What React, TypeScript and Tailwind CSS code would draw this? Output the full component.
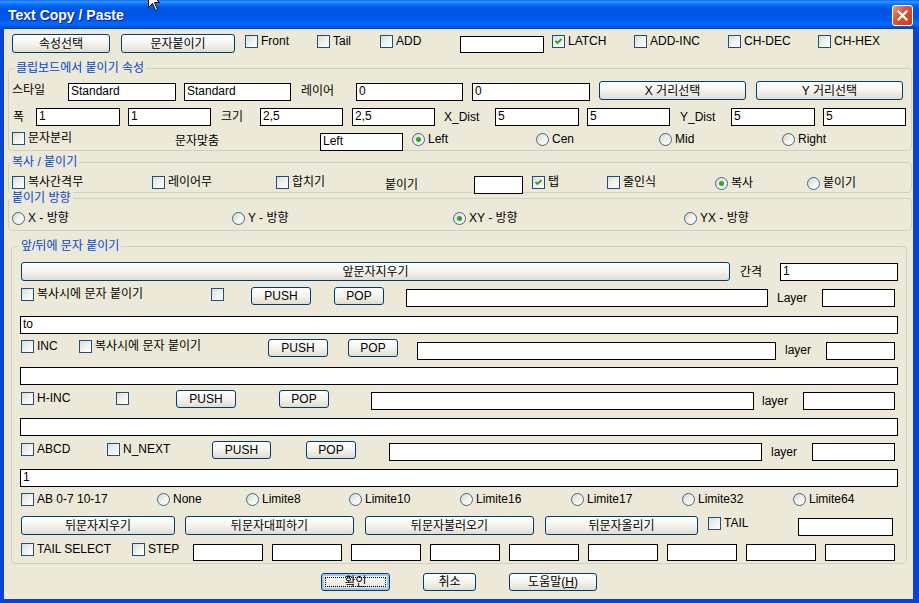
import React from "react";

type Kids = { className?: string; children?: React.ReactNode };

function Cell({ className = "", children }: Kids) {
  return <div className={`shrink-0 flex items-start ${className}`}>{children}</div>;
}

function Row({ className = "", children }: Kids) {
  return <div className={`flex items-start shrink-0 ${className}`}>{children}</div>;
}

function Check({ label, checked = false, className = "" }: { label?: string; checked?: boolean; className?: string }) {
  return (
    <div className={`flex items-center gap-[3px] h-[13px] whitespace-nowrap ${className}`}>
      <span className="relative shrink-0 w-[13px] h-[13px] border border-[#1C5180] bg-linear-to-br from-[#DCDCD7] via-[#F1F1ED] to-white">
        {checked && (
          <svg className="absolute inset-0" width="11" height="11" viewBox="0 0 11 11">
            <path d="M2.5 5 L4.5 7 L8.5 3" fill="none" stroke="#21A121" strokeWidth="1.8" />
          </svg>
        )}
      </span>
      {label && <span className="text-[12px] leading-[13px]">{label}</span>}
    </div>
  );
}

function Radio({ label, checked = false, className = "" }: { label: string; checked?: boolean; className?: string }) {
  return (
    <div className={`flex items-center gap-[3px] h-[13px] whitespace-nowrap ${className}`}>
      <span className="relative shrink-0 w-[13px] h-[13px] rounded-full border border-[#44658A] bg-linear-to-br from-[#D6D6D0] via-[#F1F1ED] to-white">
        {checked && <span className="absolute left-[3px] top-[3px] w-[5px] h-[5px] rounded-full bg-[#2CA52C]" />}
      </span>
      <span className="text-[12px] leading-[13px]">{label}</span>
    </div>
  );
}

function Input({ className = "", value = "" }: { className?: string; value?: string }) {
  return (
    <div className={`shrink-0 bg-white border border-black pl-[2px] pt-[1px] text-[12px] leading-[13px] whitespace-nowrap overflow-hidden ${className}`}>
      {value}
    </div>
  );
}

function Btn({ className = "", children, def = false }: Kids & { def?: boolean }) {
  return (
    <div
      className={`relative shrink-0 flex items-center justify-center rounded-[3px] border border-[#003C74] bg-linear-to-b from-white via-[#F4F3EE] to-[#E0DDD2] text-[12px] leading-[14px] whitespace-nowrap ${
        def ? "shadow-[inset_0_0_0_2px_#A8C3EE]" : ""
      } ${className}`}
    >
      {def && <span className="absolute inset-[3px] border border-dotted border-black" />}
      <span className="relative">{children}</span>
    </div>
  );
}

function Label({ className = "", children }: Kids) {
  return <div className={`shrink-0 whitespace-nowrap text-[12px] ${className}`}>{children}</div>;
}

function Group({ label, className = "", labelClass = "", children }: Kids & { label: string; labelClass?: string }) {
  return (
    <div className={`relative shrink-0 flex flex-col border border-[#D0D0BF] rounded-[4px] ${className}`}>
      <span
        className={`absolute top-[-8px] bg-[#ECE9D8] px-[2px] text-[12px] leading-[14px] text-[#0046D5] whitespace-nowrap ${labelClass}`}
      >
        {label}
      </span>
      {children}
    </div>
  );
}

export default function App() {
  return (
    <div className="relative w-[919px] h-[603px] overflow-hidden bg-[#0A44D4] text-black font-['Liberation_Sans','Noto_Sans_CJK_KR',sans-serif]">
      {/* Title bar */}
      <div className="h-[29px] flex items-center justify-between bg-[linear-gradient(to_bottom,#0058EE_0%,#3A93FF_4%,#288EFF_8%,#127DFF_12%,#036FFC_16%,#0262EE_22%,#0057E5_30%,#0054E3_40%,#0055EB_60%,#005BF5_70%,#026AFE_80%,#0062EF_88%,#0052D6_94%,#0040AB_100%)]">
        <span className="pl-[8px] pt-[1px] text-white font-bold text-[14px] leading-[16px] font-['Liberation_Sans',sans-serif] [text-shadow:1px_1px_0_#0A1883]">
          Text Copy / Paste
        </span>
        <div className="mr-[6px] mt-[1px] w-[21px] h-[21px] rounded-[3px] border border-white bg-[linear-gradient(135deg,#EA9A80_0%,#D9573A_40%,#C33B1B_100%)] flex items-center justify-center">
          <svg width="11" height="11" viewBox="0 0 11 11">
            <path d="M1.5 1.5 L9.5 9.5 M9.5 1.5 L1.5 9.5" stroke="white" strokeWidth="2.2" strokeLinecap="square" />
          </svg>
        </div>
      </div>

      {/* Client area */}
      <div className="ml-[4px] w-[909px] h-[570px] bg-[#ECE9D8] flex flex-col">
        {/* Row 1 */}
        <Row className="mt-[5px] h-[19px]">
          <Cell className="ml-[8px] w-[109px]">
            <Btn className="w-[98px] h-[19px]">속성선택</Btn>
          </Cell>
          <Cell className="w-[124px]">
            <Btn className="w-[114px] h-[19px]">문자붙이기</Btn>
          </Cell>
          <Cell className="w-[72px]">
            <Check className="mt-[1px]" label="Front" />
          </Cell>
          <Cell className="w-[63px]">
            <Check className="mt-[1px]" label="Tail" />
          </Cell>
          <Cell className="w-[80px]">
            <Check className="mt-[1px]" label="ADD" />
          </Cell>
          <Cell className="w-[92px]">
            <Input className="w-[84px] h-[17px] mt-[2px]" />
          </Cell>
          <Cell className="w-[82px]">
            <Check className="mt-[1px]" label="LATCH" checked />
          </Cell>
          <Cell className="w-[94px]">
            <Check className="mt-[1px]" label="ADD-INC" />
          </Cell>
          <Cell className="w-[90px]">
            <Check className="mt-[1px]" label="CH-DEC" />
          </Cell>
          <Cell>
            <Check className="mt-[1px]" label="CH-HEX" />
          </Cell>
        </Row>

        {/* Group 1 */}
        <Group label="클립보드에서 붙이기 속성" labelClass="left-[5px]" className="ml-[4px] w-[904px] h-[83px] mt-[15px]">
          <Row className="mt-[12px] h-[19px]">
            <Cell className="ml-[3px] w-[56px]">
              <Label className="h-[19px] leading-[19px]">스타일</Label>
            </Cell>
            <Cell className="w-[116px]">
              <Input className="w-[108px] h-[18px] mt-[2px]" value="Standard" />
            </Cell>
            <Cell className="w-[117px]">
              <Input className="w-[107px] h-[18px] mt-[2px]" value="Standard" />
            </Cell>
            <Cell className="w-[55px]">
              <Label className="h-[19px] leading-[19px] mt-[1px]">레이어</Label>
            </Cell>
            <Cell className="w-[116px]">
              <Input className="w-[107px] h-[18px] mt-[2px]" value="0" />
            </Cell>
            <Cell className="w-[127px]">
              <Input className="w-[118px] h-[18px] mt-[2px]" value="0" />
            </Cell>
            <Cell className="w-[157px]">
              <Btn className="w-[147px] h-[19px]">X 거리선택</Btn>
            </Cell>
            <Cell>
              <Btn className="w-[147px] h-[19px]">Y 거리선택</Btn>
            </Cell>
          </Row>
          <Row className="mt-[8px] h-[18px]">
            <Cell className="ml-[4px] w-[23px]">
              <Label className="h-[18px] leading-[18px]">폭</Label>
            </Cell>
            <Cell className="w-[92px]">
              <Input className="w-[84px] h-[18px]" value="1" />
            </Cell>
            <Cell className="w-[93px]">
              <Input className="w-[83px] h-[18px]" value="1" />
            </Cell>
            <Cell className="w-[39px]">
              <Label className="h-[18px] leading-[18px]">크기</Label>
            </Cell>
            <Cell className="w-[92px]">
              <Input className="w-[83px] h-[18px]" value="2,5" />
            </Cell>
            <Cell className="w-[92px]">
              <Input className="w-[83px] h-[18px]" value="2,5" />
            </Cell>
            <Cell className="w-[51px]">
              <Label className="h-[18px] leading-[18px]">X_Dist</Label>
            </Cell>
            <Cell className="w-[92px]">
              <Input className="w-[84px] h-[18px]" value="5" />
            </Cell>
            <Cell className="w-[93px]">
              <Input className="w-[83px] h-[18px]" value="5" />
            </Cell>
            <Cell className="w-[51px]">
              <Label className="h-[18px] leading-[18px]">Y_Dist</Label>
            </Cell>
            <Cell className="w-[92px]">
              <Input className="w-[84px] h-[18px]" value="5" />
            </Cell>
            <Cell>
              <Input className="w-[83px] h-[18px]" value="5" />
            </Cell>
          </Row>
          <Row className="mt-[6px] h-[18px]">
            <Cell className="ml-[3px] w-[163px]">
              <Check label="문자분리" />
            </Cell>
            <Cell className="w-[145px]">
              <Label className="h-[18px] leading-[18px]">문자맞춤</Label>
            </Cell>
            <Cell className="w-[92px]">
              <Input className="w-[83px] h-[18px] mt-[1px]" value="Left" />
            </Cell>
            <Cell className="w-[124px]">
              <Radio className="mt-[1px]" label="Left" checked />
            </Cell>
            <Cell className="w-[123px]">
              <Radio className="mt-[1px]" label="Cen" />
            </Cell>
            <Cell className="w-[123px]">
              <Radio className="mt-[1px]" label="Mid" />
            </Cell>
            <Cell>
              <Radio className="mt-[1px]" label="Right" />
            </Cell>
          </Row>
        </Group>

        {/* Group 2 */}
        <Group label="복사 / 붙이기" labelClass="left-[1px]" className="ml-[4px] w-[904px] h-[31px] mt-[11px]">
          <Row className="mt-[13px] h-[18px]">
            <Cell className="ml-[3px] w-[140px]">
              <Check label="복사간격무" />
            </Cell>
            <Cell className="w-[124px]">
              <Check label="레이어무" />
            </Cell>
            <Cell className="w-[109px]">
              <Check label="합치기" />
            </Cell>
            <Cell className="w-[89px]">
              <Label className="h-[18px] leading-[18px]">붙이기</Label>
            </Cell>
            <Cell className="w-[58px]">
              <Input className="w-[49px] h-[18px]" />
            </Cell>
            <Cell className="w-[75px]">
              <Check label="탭" checked />
            </Cell>
            <Cell className="w-[108px]">
              <Check label="줄인식" />
            </Cell>
            <Cell className="w-[92px]">
              <Radio className="mt-[1px]" label="복사" checked />
            </Cell>
            <Cell>
              <Radio className="mt-[1px]" label="붙이기" />
            </Cell>
          </Row>
        </Group>

        {/* Group 3 */}
        <Group label="붙이기 방향" labelClass="left-[1px]" className="ml-[4px] w-[904px] h-[33px] mt-[5px]">
          <Row className="mt-[13px] h-[13px]">
            <Cell className="ml-[3px] w-[220px]">
              <Radio label="X - 방향" />
            </Cell>
            <Cell className="w-[221px]">
              <Radio label="Y - 방향" />
            </Cell>
            <Cell className="w-[231px]">
              <Radio label="XY - 방향" checked />
            </Cell>
            <Cell>
              <Radio label="YX - 방향" />
            </Cell>
          </Row>
        </Group>

        {/* Group 4 */}
        <Group label="앞/뒤에 문자 붙이기" labelClass="left-[7px]" className="ml-[7px] w-[896px] h-[318px] mt-[15px]">
          <Row className="mt-[15px] h-[19px]">
            <Cell className="ml-[9px] w-[719px]">
              <Btn className="w-[709px] h-[19px]">앞문자지우기</Btn>
            </Cell>
            <Cell className="w-[40px]">
              <Label className="h-[19px] leading-[19px] mt-[1px]">간격</Label>
            </Cell>
            <Cell>
              <Input className="w-[118px] h-[18px] mt-[1px]" value="1" />
            </Cell>
          </Row>

          <Row className="mt-[6px] h-[20px]">
            <Cell className="ml-[9px] w-[190px]">
              <Check className="mt-[1px]" label="복사시에 문자 붙이기" />
            </Cell>
            <Cell className="w-[40px]">
              <Check className="mt-[1px]" />
            </Cell>
            <Cell className="w-[83px]">
              <Btn className="w-[60px] h-[18px]">PUSH</Btn>
            </Cell>
            <Cell className="w-[72px]">
              <Btn className="w-[50px] h-[18px]">POP</Btn>
            </Cell>
            <Cell className="w-[371px]">
              <Input className="w-[362px] h-[18px] mt-[2px]" />
            </Cell>
            <Cell className="w-[45px]">
              <Label className="h-[20px] leading-[20px] mt-[1px]">Layer</Label>
            </Cell>
            <Cell>
              <Input className="w-[73px] h-[18px] mt-[2px]" />
            </Cell>
          </Row>

          <Input className="ml-[8px] mt-[9px] w-[878px] h-[18px]" value="to" />

          <Row className="mt-[5px] h-[20px]">
            <Cell className="ml-[9px] w-[58px]">
              <Check className="mt-[1px]" label="INC" />
            </Cell>
            <Cell className="w-[189px]">
              <Check className="mt-[1px]" label="복사시에 문자 붙이기" />
            </Cell>
            <Cell className="w-[80px]">
              <Btn className="w-[60px] h-[18px]">PUSH</Btn>
            </Cell>
            <Cell className="w-[69px]">
              <Btn className="w-[50px] h-[18px]">POP</Btn>
            </Cell>
            <Cell className="w-[368px]">
              <Input className="w-[359px] h-[18px] mt-[3px]" />
            </Cell>
            <Cell className="w-[41px]">
              <Label className="h-[20px] leading-[20px] mt-[1px]">layer</Label>
            </Cell>
            <Cell>
              <Input className="w-[69px] h-[18px] mt-[3px]" />
            </Cell>
          </Row>

          <Input className="ml-[8px] mt-[8px] w-[878px] h-[18px]" />

          <Row className="mt-[5px] h-[20px]">
            <Cell className="ml-[9px] w-[95px]">
              <Check className="mt-[2px]" label="H-INC" />
            </Cell>
            <Cell className="w-[60px]">
              <Check className="mt-[2px]" />
            </Cell>
            <Cell className="w-[103px]">
              <Btn className="w-[60px] h-[18px]">PUSH</Btn>
            </Cell>
            <Cell className="w-[92px]">
              <Btn className="w-[50px] h-[18px]">POP</Btn>
            </Cell>
            <Cell className="w-[391px]">
              <Input className="w-[383px] h-[18px] mt-[2px]" />
            </Cell>
            <Cell className="w-[41px]">
              <Label className="h-[20px] leading-[20px] mt-[1px]">layer</Label>
            </Cell>
            <Cell>
              <Input className="w-[92px] h-[18px] mt-[2px]" />
            </Cell>
          </Row>

          <Input className="ml-[8px] mt-[8px] w-[878px] h-[18px]" />

          <Row className="mt-[5px] h-[20px]">
            <Cell className="ml-[9px] w-[86px]">
              <Check className="mt-[2px]" label="ABCD" />
            </Cell>
            <Cell className="w-[105px]">
              <Check className="mt-[2px]" label="N_NEXT" />
            </Cell>
            <Cell className="w-[94px]">
              <Btn className="w-[59px] h-[18px]">PUSH</Btn>
            </Cell>
            <Cell className="w-[83px]">
              <Btn className="w-[50px] h-[18px]">POP</Btn>
            </Cell>
            <Cell className="w-[382px]">
              <Input className="w-[373px] h-[18px] mt-[2px]" />
            </Cell>
            <Cell className="w-[41px]">
              <Label className="h-[20px] leading-[20px] mt-[1px]">layer</Label>
            </Cell>
            <Cell>
              <Input className="w-[83px] h-[18px] mt-[2px]" />
            </Cell>
          </Row>

          <Input className="ml-[8px] mt-[8px] w-[878px] h-[18px]" value="1" />

          <Row className="mt-[6px] h-[13px]">
            <Cell className="ml-[9px] w-[136px]">
              <Check label="AB 0-7 10-17" />
            </Cell>
            <Cell className="w-[89px]">
              <Radio label="None" />
            </Cell>
            <Cell className="w-[103px]">
              <Radio label="Limite8" />
            </Cell>
            <Cell className="w-[111px]">
              <Radio label="Limite10" />
            </Cell>
            <Cell className="w-[111px]">
              <Radio label="Limite16" />
            </Cell>
            <Cell className="w-[111px]">
              <Radio label="Limite17" />
            </Cell>
            <Cell className="w-[111px]">
              <Radio label="Limite32" />
            </Cell>
            <Cell>
              <Radio label="Limite64" />
            </Cell>
          </Row>

          <Row className="mt-[10px] h-[20px]">
            <Cell className="ml-[9px] w-[164px]">
              <Btn className="w-[154px] h-[19px]">뒤문자지우기</Btn>
            </Cell>
            <Cell className="w-[180px]">
              <Btn className="w-[169px] h-[19px]">뒤문자대피하기</Btn>
            </Cell>
            <Cell className="w-[180px]">
              <Btn className="w-[169px] h-[19px]">뒤문자불러오기</Btn>
            </Cell>
            <Cell className="w-[163px]">
              <Btn className="w-[153px] h-[19px]">뒤문자올리기</Btn>
            </Cell>
            <Cell className="w-[90px]">
              <Check className="mt-[1px]" label="TAIL" />
            </Cell>
            <Cell>
              <Input className="w-[95px] h-[18px] mt-[2px]" />
            </Cell>
          </Row>

          <Row className="mt-[7px] h-[18px]">
            <Cell className="ml-[9px] w-[111px]">
              <Check label="TAIL SELECT" />
            </Cell>
            <Cell className="w-[61px]">
              <Check label="STEP" />
            </Cell>
            <Input className="w-[70px] h-[17px] mt-[1px]" />
            <Input className="ml-[9px] w-[70px] h-[17px] mt-[1px]" />
            <Input className="ml-[9px] w-[70px] h-[17px] mt-[1px]" />
            <Input className="ml-[9px] w-[70px] h-[17px] mt-[1px]" />
            <Input className="ml-[9px] w-[70px] h-[17px] mt-[1px]" />
            <Input className="ml-[9px] w-[70px] h-[17px] mt-[1px]" />
            <Input className="ml-[9px] w-[70px] h-[17px] mt-[1px]" />
            <Input className="ml-[9px] w-[70px] h-[17px] mt-[1px]" />
            <Input className="ml-[9px] w-[70px] h-[17px] mt-[1px]" />
          </Row>
        </Group>

        {/* Bottom buttons */}
        <Row className="mt-[9px] h-[18px]">
          <Btn def className="ml-[317px] w-[69px] h-[18px]">
            확인
          </Btn>
          <Btn className="ml-[33px] w-[53px] h-[18px]">취소</Btn>
          <Btn className="ml-[33px] w-[88px] h-[18px]">
            도움말(<u>H</u>)
          </Btn>
        </Row>
      </div>

      {/* Mouse cursor */}
      <svg className="absolute left-[148px] top-[-9px]" width="13" height="21" viewBox="0 0 13 21">
        <path d="M0.5 0.5 L0.5 16.5 L4.5 12.5 L7.5 19.5 L9.5 18.5 L6.5 11.5 L11.5 11.5 Z" fill="white" stroke="black" strokeWidth="1" />
      </svg>
    </div>
  );
}
